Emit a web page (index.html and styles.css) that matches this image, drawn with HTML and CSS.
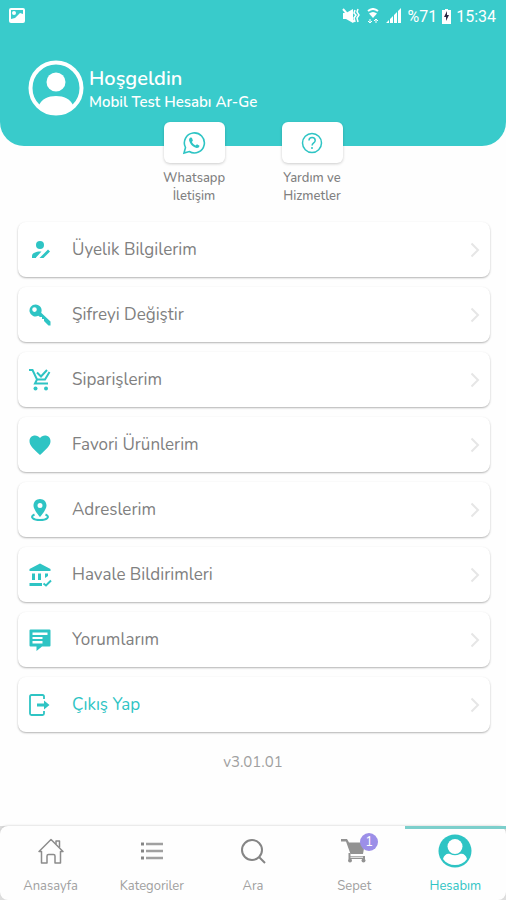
FILE: index.html
```html
<!DOCTYPE html>
<html lang="tr">
<head>
<meta charset="UTF-8">
<meta name="viewport" content="width=device-width, initial-scale=1">
<title>Hesabım</title>
<link rel="stylesheet" href="styles.css">
</head>
<body>
<header class="header">
  <div class="status-bar">
    <svg class="status-picture" width="16" height="16" viewBox="0 0 16 16">
      <rect width="16" height="15" rx="2" fill="#fff"/>
      <path d="M2 2h12v4l-3-1-5 5-4 1z" fill="#39cbcb"/>
      <circle cx="5" cy="5" r="2" fill="#fff"/>
    </svg>
    <svg width="18" height="16" viewBox="0 0 18 16" fill="#fff">
      <path d="M1 5h3l7-4v14l-7-4H1z"/>
      <path d="M1 1l11 13" stroke="#fff" stroke-width="2"/>
      <path d="M13 2l-1 3 2 2-2 3 1 4M16 1l-1 3 2 3-2 3 1 4" fill="none" stroke="#fff" stroke-width="1.500"/>
    </svg>
    <svg class="status-wifi" width="12" height="16" viewBox="0 0 12 16" fill="none" stroke="#fff">
      <path d="M1 3q5-4 10 0" stroke-width="2"/>
      <path d="M2 5.500q4-3 8 0L6 10z" fill="#fff" stroke="none"/>
      <path d="M3 11v4M1 13l2 2 2-2M9 15v-4M7 13l2-2 2 2" stroke-width="1"/>
    </svg>
    <svg width="16" height="16" viewBox="0 0 16 16" fill="#fff">
      <path d="M0 15l3-3v3zM4 11l3-3v7H4zM8 7l3-3v11H8zM12 3l3-3v15h-3z"/>
    </svg>
    <span>%71</span>
    <svg width="9" height="15" viewBox="0 0 9 15">
      <path d="M3 0h3v1h3v14H0V1h3z" fill="#fff"/>
      <path d="M5 2L2 8h2v4l3-6H5z" fill="#2c2942"/>
    </svg>
    <span>15:34</span>
  </div>
  <div class="profile">
    <svg class="avatar" width="56" height="56" viewBox="0 0 56 56">
      <circle cx="28" cy="28" r="25.500" fill="none" stroke="#fff" stroke-width="4"/>
      <circle cx="28" cy="22" r="9.500" fill="#fff"/>
      <path d="M11 45c3-6 9-9 17-9s14 3 17 9c-4 5-10 8-17 8s-13-3-17-8z" fill="#fff"/>
    </svg>
    <div>
      <h1 class="welcome">Hoşgeldin</h1>
      <p class="user-name">Mobil Test Hesabı Ar-Ge</p>
    </div>
  </div>
</header>

<main class="content">
  <div class="shortcuts">
    <button class="shortcut" type="button">
      <span class="shortcut-icon">
        <svg width="24" height="24" viewBox="0 0 24 24" fill="none" stroke="#2ec4c4" stroke-width="1.600">
          <path d="M2 22l1.500-5.500A10 10 0 1 1 7.300 20.500z"/>
          <path d="M8.500 6.500c-1 .5-1.800 1.700-1.300 3.300 1 3.600 4 6.500 7.400 7.200 1.500.2 2.600-.7 2.900-2.200l-2.500-1.500-1.500 1.300c-1.600-.7-2.900-2-3.600-3.500l1-1.500-1-2.800z" fill="#2ec4c4" stroke="none"/>
        </svg>
      </span>
      Whatsapp<br>İletişim
    </button>
    <button class="shortcut" type="button">
      <span class="shortcut-icon">
        <svg width="24" height="24" viewBox="0 0 24 24" fill="none" stroke="#2ec4c4" stroke-width="1.500">
          <circle cx="12" cy="12" r="9.500"/>
          <path d="M9 9.500c0-4 6.200-4 6.200 0 0 2.500-3.100 2.300-3.100 5"/>
          <circle cx="12" cy="17" r="1" fill="#2ec4c4" stroke="none"/>
        </svg>
      </span>
      Yardım ve<br>Hizmetler
    </button>
  </div>

  <ul class="menu">
    <li><a class="menu-item" href="#">
      <svg class="menu-icon" viewBox="0 0 24 24">
        <circle cx="12" cy="7" r="4"/>
        <path d="M4 20v-2c0-3 4-4.500 8-4.500h1.500L8 19.500V20zM11.500 20l8.500-8.500 2 2-6.500 6.500z"/>
      </svg>
      <span class="menu-label">Üyelik Bilgilerim</span>
      <svg class="chevron" viewBox="0 0 10 16"><path d="M1.500 1.500L8 8l-6.500 6.500"/></svg>
    </a></li>
    <li><a class="menu-item" href="#">
      <svg class="menu-icon" viewBox="0 0 24 24">
        <path fill-rule="evenodd" d="M7.500 1.500a6 6 0 1 0 2.800 11.300L12 14h2v2h2v2l4.500 4.500h2v-4l-9.300-8.800A6 6 0 0 0 7.500 1.500zM6.500 4.300a2.300 2.300 0 1 1 0 4.600 2.300 2.300 0 0 1 0-4.600z"/>
      </svg>
      <span class="menu-label">Şifreyi Değiştir</span>
      <svg class="chevron" viewBox="0 0 10 16"><path d="M1.500 1.500L8 8l-6.500 6.500"/></svg>
    </a></li>
    <li><a class="menu-item" href="#">
      <svg class="menu-icon" viewBox="0 0 24 24">
        <path d="M1 2h3.500l4.500 9.500h8L21.500 4M9 11.500l-2 4h13M9 4.500l4 4 6-6.500" fill="none" stroke="#2ec4c4" stroke-width="2"/>
        <circle cx="7.500" cy="20.500" r="2"/>
        <circle cx="18" cy="20.500" r="2"/>
      </svg>
      <span class="menu-label">Siparişlerim</span>
      <svg class="chevron" viewBox="0 0 10 16"><path d="M1.500 1.500L8 8l-6.500 6.500"/></svg>
    </a></li>
    <li><a class="menu-item" href="#">
      <svg class="menu-icon" viewBox="0 0 24 24">
        <path d="M12 22L10.300 20.500C4.500 15.200 1.500 12 1.500 8c0-3.300 2.500-5.500 5.500-5.500 2 0 3.800 1 5 2.500 1.200-1.500 3-2.500 5-2.500 3 0 5.500 2.200 5.500 5.500 0 4-3 7.200-8.800 12.500z"/>
      </svg>
      <span class="menu-label">Favori Ürünlerim</span>
      <svg class="chevron" viewBox="0 0 10 16"><path d="M1.500 1.500L8 8l-6.500 6.500"/></svg>
    </a></li>
    <li><a class="menu-item" href="#">
      <svg class="menu-icon" viewBox="0 0 24 24">
        <path fill-rule="evenodd" d="M12 1C8.300 1 5.500 3.800 5.500 7.500c0 4.300 6.500 11.500 6.500 11.500s6.500-7.200 6.500-11.500C18.500 3.800 15.700 1 12 1zm0 4a2.500 2.500 0 1 1 0 5 2.500 2.500 0 0 1 0-5z"/>
        <path d="M6.500 16.500c-5.500 2.500-1 5.500 5.500 5.500s11-3 5.500-5.500" fill="none" stroke="#2ec4c4" stroke-width="2"/>
      </svg>
      <span class="menu-label">Adreslerim</span>
      <svg class="chevron" viewBox="0 0 10 16"><path d="M1.500 1.500L8 8l-6.500 6.500"/></svg>
    </a></li>
    <li><a class="menu-item" href="#">
      <svg class="menu-icon" viewBox="0 0 24 24">
        <path d="M1.500 6L12 .5 22.500 6v2h-21zM4 10.500h3V17H4zM10 10.500h3V17h-3zM17 10.500h3v2.500l-3 2zM1.500 20H14v3H1.500z"/>
        <path d="M15.500 20.500l2.500 2 5-5" fill="none" stroke="#2ec4c4" stroke-width="2"/>
      </svg>
      <span class="menu-label">Havale Bildirimleri</span>
      <svg class="chevron" viewBox="0 0 10 16"><path d="M1.500 1.500L8 8l-6.500 6.500"/></svg>
    </a></li>
    <li><a class="menu-item" href="#">
      <svg class="menu-icon" viewBox="0 0 24 24">
        <path fill-rule="evenodd" d="M2.500 1.500h19q1 0 1 1v15q0 1-1 1h-7.500L8.500 23v-4.500h-6q-1 0-1-1v-15q0-1 1-1zM4.500 4.500v2.500h15V4.500zM4.500 9v2h10V9zM4.500 13v2.500h10V13z"/>
      </svg>
      <span class="menu-label">Yorumlarım</span>
      <svg class="chevron" viewBox="0 0 10 16"><path d="M1.500 1.500L8 8l-6.500 6.500"/></svg>
    </a></li>
    <li><a class="menu-item logout" href="#">
      <svg class="menu-icon" viewBox="0 0 24 24">
        <path d="M16 6V3.500q0-1.500-1.500-1.500h-11Q2 2 2 3.500v17Q2 22 3.500 22h11q1.500 0 1.500-1.500V18" fill="none" stroke="#2ec4c4" stroke-width="1.800"/>
        <path d="M9 10.500h7V7.500l5.500 4.500-5.500 4.500v-3H9z"/>
      </svg>
      <span class="menu-label">Çıkış Yap</span>
      <svg class="chevron" viewBox="0 0 10 16"><path d="M1.500 1.500L8 8l-6.500 6.500"/></svg>
    </a></li>
  </ul>
  <p class="version">v3.01.01</p>
</main>

<div class="tab-bar">
  <nav class="tabs">
    <a class="tab" href="#">
      <span class="tab-icon">
        <svg width="26" height="26" viewBox="0 0 26 26" fill="none" stroke="#8c8c8c" stroke-width="1.500" stroke-linejoin="round">
          <path d="M1 13.500L13 1.500l12 12h-2.500V25H17v-7q0-1.500-1.500-1.500h-5Q9 16.500 9 18v7H3.500V13.500z"/>
          <path d="M18 6V3h3.500v6.500"/>
        </svg>
      </span>
      Anasayfa
    </a>
    <a class="tab" href="#">
      <span class="tab-icon">
        <svg width="24" height="24" viewBox="0 0 24 24" fill="none" stroke="#a0a0a0" stroke-width="3">
          <path d="M1 5h3M1 12h3M1 19h3" stroke="#858585"/>
          <path d="M6 5h17M6 12h17M6 19h17" stroke-width="2.500"/>
        </svg>
      </span>
      Kategoriler
    </a>
    <a class="tab" href="#">
      <span class="tab-icon">
        <svg width="26" height="26" viewBox="0 0 26 26" fill="none" stroke="#858585" stroke-width="2">
          <circle cx="12" cy="12" r="10"/>
          <path d="M19 19l6 6"/>
        </svg>
      </span>
      Ara
    </a>
    <a class="tab" href="#">
      <span class="tab-icon">
        <svg width="26" height="26" viewBox="0 0 26 26" fill="#929292">
          <path d="M0 1h6l2 3.500h16L22 16H9.500L5 3.500H0z"/>
          <path d="M7.500 15h2v3H24v3H7.500z"/>
          <path d="M9.500 18.700H22v1H9.500z" fill="#fefefe"/>
          <circle cx="9" cy="22.500" r="2"/>
          <circle cx="22.500" cy="22.500" r="2"/>
        </svg>
        <span class="badge">1</span>
      </span>
      Sepet
    </a>
    <a class="tab active" href="#">
      <span class="tab-icon">
        <svg width="34" height="34" viewBox="0 0 34 34">
          <circle cx="17" cy="17" r="16.500" fill="#2ec4c4"/>
          <circle cx="17" cy="12.500" r="7.500" fill="#fff"/>
          <path d="M5 25c1-4 4-6 7-5q5 2.500 10 0c3-1 6 1 7 5-3 4-7 6-12 6s-9-2-12-6z" fill="#fff"/>
        </svg>
      </span>
      Hesabım
    </a>
  </nav>
</div>
</body>
</html>
```

FILE: styles.css
```css
* {
  box-sizing: border-box;
}
body {
  margin: 0;
  min-height: 100vh;
  display: flex;
  flex-direction: column;
  background-color: #fefefe;
  color: #808080;
  font-family: Nunito, "Open Sans", sans-serif;
}
a {
  color: inherit;
  text-decoration: none;
}
svg {
  display: block;
  flex-shrink: 0;
}

/* Header */
.header {
  height: 146px;
  background-color: #39cbcb;
  border-radius: 0 0 24px 24px;
  color: white;
}
.status-bar {
  display: flex;
  align-items: center;
  gap: 5px;
  height: 32px;
  padding: 0 10px 0 9px;
  font-family: Roboto, sans-serif;
  font-size: 16px;
}
.status-picture {
  margin-right: auto;
}
.status-wifi {
  margin: 0 2px;
}
.profile {
  display: flex;
  align-items: center;
  gap: 5px;
  padding: 28px 28px 0;
}
.welcome {
  margin: 4px 0 0;
  font-size: 20px;
  line-height: 24px;
  font-weight: 600;
}
.user-name {
  margin: 0;
  font-size: 15px;
  line-height: 22px;
  font-weight: 600;
}

/* Shortcuts */
.shortcuts {
  display: flex;
  justify-content: center;
  margin-top: -24px;
}
.shortcut {
  display: flex;
  flex-direction: column;
  align-items: center;
  width: 118px;
  padding: 0;
  border: none;
  background: none;
  color: #808080;
  font-family: inherit;
  font-size: 13px;
  line-height: 18px;
  font-weight: 500;
  cursor: pointer;
}
.shortcut-icon {
  display: flex;
  align-items: center;
  justify-content: center;
  width: 61px;
  height: 41px;
  margin-bottom: 6px;
  border-radius: 6px;
  background-color: white;
  box-shadow: 0 1px 3px rgba(0,0,0,0.2);
}

/* Menu */
.menu {
  display: flex;
  flex-direction: column;
  gap: 10px;
  margin: 0;
  padding: 17px 16px 0 18px;
  list-style: none;
}
.menu-item {
  display: flex;
  align-items: center;
  height: 55px;
  padding: 0 10px;
  border-radius: 8px;
  background-color: white;
  box-shadow: 0 1px 2px rgba(0,0,0,0.3);
}
.menu-icon {
  width: 24px;
  height: 24px;
  fill: #2ec4c4;
}
.menu-label {
  flex: 1;
  margin-left: 20px;
  font-size: 17px;
  line-height: 24px;
}
.logout {
  color: #2ec4c4;
}
.chevron {
  width: 10px;
  height: 16px;
  fill: none;
  stroke: #e6e6e6;
  stroke-width: 2;
}
.version {
  margin: 18px 0;
  font-size: 15px;
  line-height: 24px;
  text-align: center;
  color: #a0a0a0;
}

/* Tab bar */
.tab-bar {
  margin-top: auto;
  background-color: #ddd;
}
.tabs {
  display: flex;
  height: 74px;
  border-radius: 8px;
  background-color: #fefefe;
  box-shadow: 0 -1px 2px rgba(0,0,0,0.1);
}
.tab {
  flex: 1;
  display: flex;
  flex-direction: column;
  align-items: center;
  border-top: 3px solid transparent;
  font-size: 13px;
  line-height: 18px;
  color: #a0a0a0;
}
.tab-icon {
  position: relative;
  display: flex;
  align-items: center;
  height: 44px;
  margin-bottom: 4px;
}
.active {
  border-top-color: #7ccfcc;
  color: #2ec4c4;
}
.badge {
  position: absolute;
  top: 4px;
  left: 19px;
  width: 18px;
  height: 18px;
  border-radius: 50%;
  background-color: #9c8fe8;
  color: white;
  font-size: 13px;
  line-height: 18px;
  text-align: center;
}
```
